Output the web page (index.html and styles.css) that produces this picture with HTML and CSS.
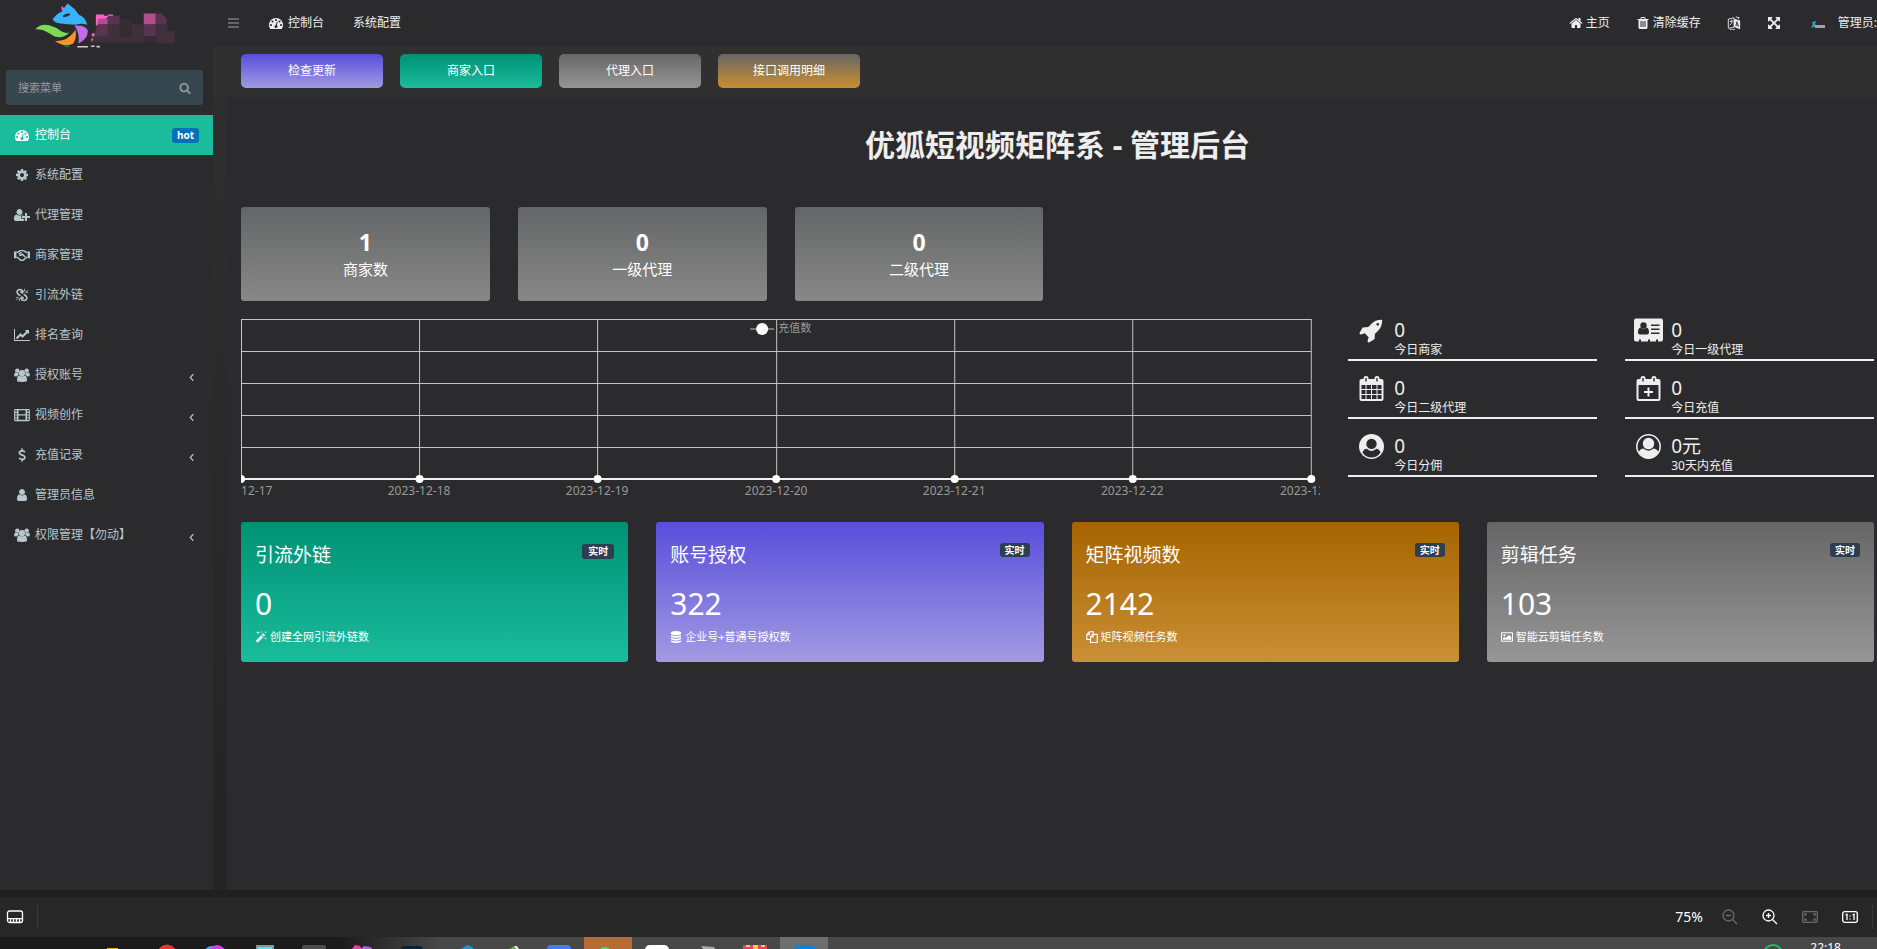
FILE: index.html
```html
<!DOCTYPE html>
<html lang="zh-CN">
<head>
<meta charset="utf-8">
<title>管理后台</title>
<link rel="stylesheet" href="styles.css">
</head>
<body>
<svg class="sprite" aria-hidden="true">
  <symbol id="i-dash" viewBox="0 0 1792 1792"><path d="M384 1152q0-53-37.500-90.500t-90.500-37.500-90.500 37.500-37.500 90.500 37.500 90.500 90.500 37.500 90.500-37.500 37.500-90.500zm192-448q0-53-37.500-90.500t-90.500-37.500-90.500 37.500-37.500 90.500 37.500 90.500 90.500 37.500 90.500-37.500 37.500-90.500zm428 481l101-382q6-26-7.500-48.500t-38.500-29.500-48 6.500-30 39.500l-101 382q-60 5-107 43.500t-63 98.500q-20 77 20 146t117 89 146-20 89-117q16-60-6-117t-72-91zm660-33q0-53-37.500-90.500t-90.500-37.500-90.500 37.500-37.500 90.500 37.500 90.500 90.500 37.500 90.500-37.500 37.500-90.500zm-640-640q0-53-37.500-90.500t-90.500-37.500-90.500 37.500-37.500 90.500 37.500 90.500 90.500 37.500 90.500-37.500 37.500-90.500zm448 192q0-53-37.500-90.500t-90.500-37.500-90.500 37.500-37.500 90.500 37.500 90.500 90.500 37.500 90.500-37.500 37.500-90.500zm320 448q0 261-141 483-19 29-54 29h-1402q-35 0-54-29-141-221-141-483 0-182 71-348t191-286 286-191 348-71 348 71 286 191 191 286 71 348z"/></symbol>
  <symbol id="i-cog" viewBox="0 0 1792 1792"><path d="M1152 896q0-106-75-181t-181-75-181 75-75 181 75 181 181 75 181-75 75-181zm512-109v222q0 12-8 23t-20 13l-185 28q-19 54-39 91 35 50 107 138 10 12 10 25t-9 23q-27 37-99 108t-94 71q-12 0-26-9l-138-108q-44 23-91 38-16 136-29 186-7 28-36 28h-222q-14 0-24.500-8.500t-11.500-21.500l-28-184q-49-16-90-37l-141 107q-10 9-25 9-14 0-25-11-126-114-165-168-7-10-7-23 0-12 8-23 15-21 51-66.500t54-70.500q-27-50-41-99l-183-27q-13-2-21-12.500t-8-23.500v-222q0-12 8-23t19-13l186-28q14-46 39-92-40-57-107-138-10-12-10-24 0-10 9-23 26-36 98.500-107.500t94.500-71.500q13 0 26 10l138 107q44-23 91-38 16-136 29-186 7-28 36-28h222q14 0 24.500 8.500t11.500 21.500l28 184q49 16 90 37l142-107q9-9 24-9 13 0 25 10 129 119 165 170 7 8 7 22 0 12-8 23-15 21-51 66.500t-54 70.500q26 50 41 98l183 28q13 2 21 12.500t8 23.500z"/></symbol>
  <symbol id="i-home" viewBox="0 0 1792 1792"><path d="M1472 992v480q0 26-19 45t-45 19h-384v-384h-256v384h-384q-26 0-45-19t-19-45v-480q0-1 .5-3t.5-3l575-474 575 474q1 2 1 6zm223-69l-62 74q-8 9-21 11h-3q-13 0-21-7l-692-577-692 577q-12 8-24 7-13-2-21-11l-62-74q-8-10-7-23.500t11-21.500l719-599q32-26 76-26t76 26l244 204v-195q0-14 9-23t23-9h192q14 0 23 9t9 23v408l219 182q10 8 11 21.500t-7 23.500z"/></symbol>
  <symbol id="i-search" viewBox="0 0 1792 1792"><path d="M1216 832q0-185-131.500-316.500t-316.500-131.500-316.500 131.500-131.500 316.500 131.500 316.500 316.500 131.500 316.500-131.500 131.500-316.500zm512 832q0 52-38 90t-90 38q-54 0-90-38l-343-342q-179 124-399 124-143 0-273.500-55.500t-225-150-150-225-55.500-273.500 55.500-273.500 150-225 225-150 273.500-55.500 273.500 55.500 225 150 150 225 55.500 273.500q0 220-124 399l343 343q37 37 37 90z"/></symbol>
  <symbol id="i-user" viewBox="0 0 1792 1792"><path d="M1536 1399q0 109-62.500 187t-150.500 78h-854q-88 0-150.500-78t-62.500-187q0-85 8.500-160.500t31.500-152 58.500-131 94-89 134.500-34.500q131 128 313 128t313-128q76 0 134.500 34.500t94 89 58.500 131 31.500 152 8.500 160.500zm-256-887q0 159-112.500 271.500t-271.500 112.500-271.500-112.500-112.500-271.500 112.500-271.500 271.500-112.500 271.500 112.500 112.500 271.500z"/></symbol>
  <symbol id="i-useradd" viewBox="0 0 2048 1792"><path d="M704 896q-159 0-271.500-112.500t-112.500-271.500 112.500-271.500 271.500-112.500 271.500 112.500 112.500 271.500-112.500 271.500-271.500 112.500zm960 128h352q13 0 22.500 9.500t9.500 22.500v192q0 13-9.500 22.500t-22.500 9.500h-352v352q0 13-9.500 22.500t-22.500 9.500h-192q-13 0-22.500-9.500t-9.500-22.500v-352h-352q-13 0-22.500-9.500t-9.500-22.500v-192q0-13 9.500-22.500t22.500-9.500h352v-352q0-13 9.500-22.500t22.500-9.500h192q13 0 22.500 9.500t9.500 22.500v352zm-736 224q0 52 38 90t90 38h256v238q-68 50-171 50h-874q-121 0-194-69t-73-190q0-53 3.500-103.500t14-109 26.500-108.500 43-97.500 62-81 85.500-53.500 111.500-20q19 0 39 17 79 61 154.500 91.500t164.500 30.500 164.500-30.500 154.500-91.500q20-17 39-17 132 0 217 96h-223q-52 0-90 38t-38 90v192z"/></symbol>
  <symbol id="i-trash" viewBox="0 0 1792 1792"><path d="M704 1376v-704q0-14-9-23t-23-9h-64q-14 0-23 9t-9 23v704q0 14 9 23t23 9h64q14 0 23-9t9-23zm256 0v-704q0-14-9-23t-23-9h-64q-14 0-23 9t-9 23v704q0 14 9 23t23 9h64q14 0 23-9t9-23zm256 0v-704q0-14-9-23t-23-9h-64q-14 0-23 9t-9 23v704q0 14 9 23t23 9h64q14 0 23-9t9-23zm-544-992h448l-48-117q-7-9-17-11h-317q-10 2-17 11zm928 32v64q0 14-9 23t-23 9h-96v948q0 83-47 143.500t-113 60.500h-832q-66 0-113-58.500t-47-141.500v-952h-96q-14 0-23-9t-9-23v-64q0-14 9-23t23-9h309l70-167q15-37 54-63t79-26h320q40 0 79 26t54 63l70 167h309q14 0 23 9t9 23z"/></symbol>
  <symbol id="i-expand" viewBox="0 0 1792 1792"><path d="M1411 541l-355 355 355 355 144-144q29-31 70-14 39 17 39 59v448q0 26-19 45t-45 19h-448q-42 0-59-40-17-39 14-69l144-144-355-355-355 355 144 144q31 30 14 69-17 40-59 40h-448q-26 0-45-19t-19-45v-448q0-42 40-59 39-17 69 14l144 144 355-355-355-355-144 144q-19 19-45 19-12 0-24-5-40-17-40-59v-448q0-26 19-45t45-19h448q42 0 59 40 17 39-14 69l-144 144 355 355 355-355-144-144q-31-30-14-69 17-40 59-40h448q26 0 45 19t19 45v448q0 42-39 59-13 5-25 5-26 0-45-19z"/></symbol>
  <symbol id="i-line" viewBox="0 0 2048 1792"><path d="M2048 1536v128h-2048v-1536h128v1408h1920zm-128-1248v435q0 21-19.500 29.500t-35.500-7.500l-121-121-633 633q-10 10-23 10t-23-10l-233-233-416 416-192-192 585-585q10-10 23-10t23 10l233 233 464-464-121-121q-16-16-7.500-35.500t29.500-19.500h435q14 0 23 9t9 23z"/></symbol>
  <symbol id="i-rocket" viewBox="0 0 1792 1792"><path d="M1440 448q0-40-28-68t-68-28-68 28-28 68 28 68 68 28 68-28 28-68zm224-288q0 249-75.500 430.500t-253.500 360.500q-81 80-195 176l-20 379q-2 16-16 26l-384 224q-7 4-16 4-12 0-23-9l-64-64q-13-14-8-32l85-276-281-281-276 85q-3 1-9 1-14 0-23-9l-64-64q-17-19-5-39l224-384q10-14 26-16l379-20q96-114 176-195 188-187 358-258t431-71q14 0 24 9.500t10 22.500z"/></symbol>
  <symbol id="i-db" viewBox="0 0 1792 1792"><path d="M896 768q237 0 443-43t325-127v170q0 69-103 128t-280 93.500-385 34.500-385-34.500-280-93.500-103-128v-170q119 84 325 127t443 43zm0 768q237 0 443-43t325-127v170q0 69-103 128t-280 93.500-385 34.500-385-34.500-280-93.500-103-128v-170q119 84 325 127t443 43zm0-384q237 0 443-43t325-127v170q0 69-103 128t-280 93.500-385 34.500-385-34.500-280-93.500-103-128v-170q119 84 325 127t443 43zm0-1152q208 0 385 34.500t280 93.500 103 128v128q0 69-103 128t-280 93.500-385 34.500-385-34.500-280-93.500-103-128v-128q0-69 103-128t280-93.500 385-34.500z"/></symbol>
  <symbol id="i-shake" viewBox="0 0 20 16"><path d="M0 3.500h3v8.500H0zM17 3.500h3v8.500h-3z"/><path d="M3 4.500h2l2.500-2h5l2.500 2h2M3 11h1.500l4 3.500h3l4-3.500H17M14 10.500L10.500 7 8.500 8.500Q6.500 8.500 7 6.500L9.500 4.500" fill="none" stroke="currentColor" stroke-width="1.800"/></symbol>
  <symbol id="i-unlink" viewBox="0 0 16 16"><path d="M6 9L3 6.500Q1.500 4 3.500 2.500t4.500 0L10 5M10 7l3 2.500q1.500 2.500-.5 4t-4.500 0L6 11M9 6L6 4M7 10l3 2" fill="none" stroke="currentColor" stroke-width="1.800"/><path d="M11 1v3M12 5h3M12.500 4.500l2-2M5 12v3M1 11h3M1.500 14l2-2" stroke="currentColor"/></symbol>
  <symbol id="i-group" viewBox="0 0 18 16"><circle cx="9" cy="5.800" r="3.600"/><circle cx="3.600" cy="3" r="2.500"/><circle cx="14.400" cy="3" r="2.500"/><path d="M3.500 15.500q-.8-6.500 2.300-7 3.200 2 6.400 0 3.100.5 2.300 7-5.500 1-11 0zM0 9.500Q0 5 1.500 5q1.800 1.200 3.300.6Q4.800 7 5.600 8 4 8 3 9.800zM18 9.500Q18 5 16.500 5q-1.800 1.200-3.300.6Q13.200 7 12.400 8 14 8 15 9.800z"/></symbol>
  <symbol id="i-film" viewBox="0 0 18 16"><path fill-rule="evenodd" d="M1.500 1h15q1.500 0 1.500 1.500v11q0 1.500-1.500 1.500h-15Q0 15 0 13.500v-11Q0 1 1.500 1zM5 2.500v4.700h8V2.500zM5 8.700v4.800h8V8.700zM1.200 2.500v1.800h2V2.500zM1.200 5.600v1.800h2V5.600zM1.200 8.700v1.800h2V8.700zM1.200 11.700v1.800h2v-1.800zM14.800 2.500v1.800h2V2.500zM14.800 5.600v1.800h2V5.600zM14.800 8.700v1.800h2V8.700zM14.800 11.700v1.800h2v-1.800z"/></symbol>
  <symbol id="i-dollar" viewBox="0 0 16 16"><path d="M11.500 4.500Q8 2.500 5.800 4T6.500 7.300l3 1.200q2.800 1.500 1.300 3.500T4.500 11.800M8 .5V3M8 13v2.500" fill="none" stroke="currentColor" stroke-width="2"/></symbol>
  <symbol id="i-left" viewBox="0 0 16 16"><path d="M10 3L5.500 8l4.500 5" fill="none" stroke="currentColor" stroke-width="1.800"/></symbol>
  <symbol id="i-lang" viewBox="0 0 16 16"><path d="M8 3l7 2v10l-7-2.500z"/><path d="M10 11.500l1.500-5 1.700 6M10.500 10l2 .6" fill="none" stroke="#2b2b2d"/><path d="M1.500 3.500L8 2v11l-6.500 1zM3 6.500L6.500 5.500M5 4.500v1.500M3 10.500Q5.500 9 6 6M10 1l4 1-1.500 1.500M3 15q3 1.500 6 .3" fill="none" stroke="currentColor"/></symbol>
  <symbol id="i-card" viewBox="0 0 29 24"><path d="M2 0h25q2 0 2 2v19q0 2-2 2h-3v-2h-2v2h-6v-2h-2v2H7v-2H5v2H2q-2 0-2-2V2q0-2 2-2z"/><g fill="#2b2b2d"><circle cx="9.500" cy="7" r="3.200"/><path d="M6.500 9q3 2.500 6 0 2.500.5 2.500 5 0 2-2 2H6q-2 0-2-2 0-4.500 2.500-5zM17 6h8.500v1.500H17zM17 10h8.500v1.500H17zM17 14h8.500v1.500H17z"/></g></symbol>
  <symbol id="i-cal" viewBox="0 0 24 25"><path fill-rule="evenodd" d="M2 3h2V2q0-2 2.500-2T9 2v1h6V2q0-2 2.500-2T20 2v1h2q2 0 2 2v18q0 2-2 2H2q-2 0-2-2V5q0-2 2-2zM5.800 2v3.500h1.400V2zM16.800 2v3.500h1.400V2zM2 9v4h4V9zM7 9v4h4.500V9zM12.500 9v4H17V9zM18 9v4h4V9zM2 14v4h4v-4zM7 14v4h4.500v-4zM12.500 14v4H17v-4zM18 14v4h4v-4zM2 19v4h4v-4zM7 19v4h4.500v-4zM12.500 19v4H17v-4zM18 19v4h4v-4z"/></symbol>
  <symbol id="i-calplus" viewBox="0 0 24 25"><path fill-rule="evenodd" d="M2 3h2V2q0-2 2.500-2T9 2v1h6V2q0-2 2.500-2T20 2v1h2q2 0 2 2v18q0 2-2 2H2q-2 0-2-2V5q0-2 2-2zM5.800 2v3.500h1.400V2zM16.800 2v3.500h1.400V2zM2 9v14h20V9zM11 11.500h2V15h3.500v2H13v3.500h-2V17H7.500v-2H11z"/></symbol>
  <symbol id="i-usero" viewBox="0 0 24 24"><circle cx="12" cy="12" r="12"/><g fill="#2b2b2d"><circle cx="12" cy="9.500" r="5"/><path d="M7.500 14.200Q4.500 14.500 3.300 17.800a10.400 10.400 0 0 0 17.400 0q-1.200-3.300-4.200-3.600-4.500 4.300-9 0z"/></g></symbol>
  <symbol id="i-userf" viewBox="0 0 24 24"><circle cx="12" cy="12" r="11.200" fill="none" stroke="currentColor" stroke-width="1.500"/><circle cx="12" cy="9.200" r="5.500"/><path d="M7 14q5 4 10 0 3.500.5 4.500 4-4 5.500-9.500 5.500T2.500 18q1-3.500 4.500-4z"/></symbol>
  <symbol id="i-magic" viewBox="0 0 16 16"><path d="M1 13L11 3l2.500 2.500L3.500 15.500zM9 6.500L10.500 8l1.300-1.300-1.500-1.500z" fill-rule="evenodd"/><path d="M4 0l.6 1.700L6.500 2.300l-1.900.6L4 4.500l-.6-1.600-1.900-.6 1.900-.6zM14 0l.4 1 1.200.5-1.200.5L14 3l-.4-1-1.200-.5 1.200-.5zM14 8l.4 1.200 1.300.5-1.300.5-.4 1.300-.4-1.300-1.300-.5 1.300-.5zM8.500 0l.4 1 1 .4-1 .4-.4 1-.4-1-1-.4 1-.4z"/></symbol>
  <symbol id="i-copy" viewBox="0 0 16 16"><path d="M5.500 11.300H1V5l3.500-4h5v3M4.500 1v4H1M9 4.500h6v10.800H6V8l3-3.500zM9.500 4.500V8H6" fill="none" stroke="currentColor" stroke-width="1.500"/></symbol>
  <symbol id="i-image" viewBox="0 0 18 16"><path fill-rule="evenodd" d="M1.500 1h15q1.500 0 1.500 1.500v11q0 1.500-1.500 1.500h-15Q0 15 0 13.500v-11Q0 1 1.500 1zM1.500 2.500v11h15v-11z"/><circle cx="5" cy="5.500" r="1.700"/><path d="M3 12v-2l2.500-2 1.500 1.500L12 5l3.500 3.500V12z"/></symbol>
</svg>

<div class="app">
  <aside class="side">
    <div class="brand">
      <svg class="logo" viewBox="105 5 430 140" role="img" aria-label="logo">
        <path fill="#38b2fb" d="M203 9l20 16 14 18q20 8 25 30-20-6-34 0-28-2-46-4-18-2-24-12 12-18 28-24 6-12 17-24z"/>
        <path fill="#2b2b2d" d="M190 44q12-8 22-4-6 10-22 10z"/>
        <path fill="#ff5fc8" d="M184 20l4-3 6 10-8 4z"/>
        <path fill="#7ed957" d="M106 86q16-18 42-12 22 6 36 18 14 8 24 4-18 20-44 12-20-12-32-18-12-4-26-4z"/>
        <path fill="#f7952c" d="M165 122q28 0 44-14 12-10 18-20 4 26-8 42-22 12-54-8z"/>
        <path fill="#c46be8" d="M224 76q30-4 40 14 0 26-28 39 4-30-12-53z"/>
        <path fill="#ff5fc8" d="M288 42h24v4h12v-4h16v6h-14l-10 8h-12l-10 20h-6zM276 98h8v10h-8zM274 114h10v9h-10z"/>
        <path fill="#b14e8c" d="M296 54h28v18h-32zM432 39h36v33h-36z"/>
        <path fill="#593450" d="M324 46h36v26h-36zM468 39h18l15 15v18h-33zM292 72h32v36h-40zM432 72h36v36h-36z"/>
        <path fill="#40303b" d="M324 72h36v36h-36zM396 72h36v36h-36zM468 72h36v20h22v36h-58zM284 108h148v18H274z"/>
        <path fill="#352d33" d="M360 54h36v54h-36zM432 108h36v18h-36z"/>
        <path fill="#d0d0d0" d="M232 137h32v4h-32zM274 135h10v5h-10zM290 136h10v5h-10z"/>
        <path fill="#0f7f68" d="M194 136h14v4h-14z"/>
      </svg>
    </div>
    <form class="search">
      <input type="text" placeholder="搜索菜单" aria-label="搜索菜单">
      <button type="button" aria-label="搜索"><svg class="ic"><use href="#i-search"/></svg></button>
    </form>
    <nav class="menu">
      <a class="on" href="#"><svg class="ic"><use href="#i-dash"/></svg><span>控制台</span><b class="hot">hot</b></a>
      <a href="#"><svg class="ic"><use href="#i-cog"/></svg><span>系统配置</span></a>
      <a href="#"><svg class="ic"><use href="#i-useradd"/></svg><span>代理管理</span></a>
      <a href="#"><svg class="ic"><use href="#i-shake"/></svg><span>商家管理</span></a>
      <a href="#"><svg class="ic"><use href="#i-unlink"/></svg><span>引流外链</span></a>
      <a href="#"><svg class="ic"><use href="#i-line"/></svg><span>排名查询</span></a>
      <a href="#"><svg class="ic"><use href="#i-group"/></svg><span>授权账号</span><svg class="arrow"><use href="#i-left"/></svg></a>
      <a href="#"><svg class="ic"><use href="#i-film"/></svg><span>视频创作</span><svg class="arrow"><use href="#i-left"/></svg></a>
      <a href="#"><svg class="ic"><use href="#i-dollar"/></svg><span>充值记录</span><svg class="arrow"><use href="#i-left"/></svg></a>
      <a href="#"><svg class="ic"><use href="#i-user"/></svg><span>管理员信息</span></a>
      <a href="#"><svg class="ic"><use href="#i-group"/></svg><span>权限管理【勿动】</span><svg class="arrow"><use href="#i-left"/></svg></a>
    </nav>
  </aside>

  <div class="main">
    <header class="top">
      <button class="burger" type="button" aria-label="菜单"><i></i><i></i><i></i></button>
      <nav class="tabs">
        <a href="#"><svg class="ic"><use href="#i-dash"/></svg>控制台</a>
        <a href="#">系统配置</a>
      </nav>
      <nav class="tools">
        <a href="#"><svg class="ic"><use href="#i-home"/></svg>主页</a>
        <a href="#"><svg class="ic"><use href="#i-trash"/></svg>清除缓存</a>
        <a href="#" aria-label="语言"><svg class="ic"><use href="#i-lang"/></svg></a>
        <a href="#" aria-label="全屏"><svg class="ic"><use href="#i-expand"/></svg></a>
        <a class="me" href="#"><svg class="avatar" viewBox="0 0 15 8"><path d="M0 7l2-4-1-2 4-1-1 3 2 2-3 1z" fill="#22a7c9"/><path d="M4 4h10v3H4z" fill="#9fa4a8"/></svg>管理员:</a>
      </nav>
    </header>

    <div class="actions">
      <button class="violet" type="button">检查更新</button>
      <button class="green" type="button">商家入口</button>
      <button class="gray" type="button">代理入口</button>
      <button class="mix" type="button">接口调用明细</button>
    </div>

    <main class="panel">
      <h1>优狐短视频矩阵系 - 管理后台</h1>
      <section class="grid six">
        <div class="tile"><strong>1</strong><span>商家数</span></div>
        <div class="tile"><strong>0</strong><span>一级代理</span></div>
        <div class="tile"><strong>0</strong><span>二级代理</span></div>
      </section>

      <section class="grid six">
        <svg class="chart" viewBox="0 0 1079 187" role="img" aria-label="充值数">
          <path class="rule" d="M0 1.500H1070M0 33.500H1070M0 65.500H1070M0 97.500H1070M0 129.500H1070M.5 1V161M178.500 1V161M356.500 1V161M535.500 1V161M713.500 1V161M891.500 1V161M1070 1V161"/>
          <path class="series" d="M0 161H1070"/>
          <g class="dots"><circle cx="0" cy="161" r="4"/><circle cx="178.500" cy="161" r="4"/><circle cx="356.500" cy="161" r="4"/><circle cx="535" cy="161" r="4"/><circle cx="713.500" cy="161" r="4"/><circle cx="891.500" cy="161" r="4"/><circle cx="1070" cy="161" r="4"/></g>
          <path class="rule" d="M509 11H533"/>
          <circle class="key" cx="521" cy="11" r="6"/>
          <text x="537" y="14" class="legend">充值数</text>
          <g class="axis"><text x="0" y="177">2023-12-17</text><text x="178" y="177">2023-12-18</text><text x="356" y="177">2023-12-19</text><text x="535" y="177">2023-12-20</text><text x="713" y="177">2023-12-21</text><text x="891" y="177">2023-12-22</text><text x="1070" y="177">2023-12-23</text></g>
        </svg>
        <div class="stats">
          <div class="stat"><svg><use href="#i-rocket"/></svg><b>0</b><span>今日商家</span></div>
          <div class="stat"><svg><use href="#i-card"/></svg><b>0</b><span>今日一级代理</span></div>
          <div class="stat"><svg><use href="#i-cal"/></svg><b>0</b><span>今日二级代理</span></div>
          <div class="stat"><svg><use href="#i-calplus"/></svg><b>0</b><span>今日充值</span></div>
          <div class="stat"><svg><use href="#i-usero"/></svg><b>0</b><span>今日分佣</span></div>
          <div class="stat"><svg><use href="#i-userf"/></svg><b>0元</b><span>30天内充值</span></div>
        </div>
      </section>

      <section class="grid four">
        <article class="card green"><header><h2>引流外链</h2><em class="big">实时</em></header><strong>0</strong><p><svg><use href="#i-magic"/></svg>创建全网引流外链数</p></article>
        <article class="card violet"><header><h2>账号授权</h2><em>实时</em></header><strong>322</strong><p><svg><use href="#i-db"/></svg>企业号+普通号授权数</p></article>
        <article class="card amber"><header><h2>矩阵视频数</h2><em>实时</em></header><strong>2142</strong><p><svg><use href="#i-copy"/></svg>矩阵视频任务数</p></article>
        <article class="card gray"><header><h2>剪辑任务</h2><em>实时</em></header><strong>103</strong><p><svg><use href="#i-image"/></svg>智能云剪辑任务数</p></article>
      </section>
    </main>
  </div>
</div>

<footer class="viewer">
  <button class="strip" type="button" aria-label="胶片栏"><svg class="outline" viewBox="0 0 18 14"><rect x="1.500" y="1" width="15" height="11.500" rx="2"/><path d="M1.500 8.700h15M4.500 9v3.500M7.500 9v3.500M10.500 9v3.500M13.500 9v3.500"/></svg></button>
  <div class="zoom">
    <span>75%</span>
    <button class="off" type="button" aria-label="缩小"><svg class="outline" viewBox="0 0 16 16"><circle cx="6.500" cy="6.500" r="5.500"/><path d="M10.500 10.500L15 15M4 6.500h5"/></svg></button>
    <button type="button" aria-label="放大"><svg class="outline" viewBox="0 0 16 16"><circle cx="6.500" cy="6.500" r="5.500"/><path d="M10.500 10.500L15 15M4 6.500h5M6.500 4v5"/></svg></button>
    <button class="off" type="button" aria-label="适应窗口"><svg class="outline" viewBox="0 0 16 12"><rect x=".7" y=".7" width="14.600" height="10.600" rx="1"/><path d="M3 5V3h2M11 3h2v2M13 7v2h-2M5 9H3V7"/></svg></button>
    <button type="button" aria-label="原始大小"><svg class="outline" viewBox="0 0 16 12"><rect x=".7" y=".7" width="14.600" height="10.600" rx="2"/><path d="M3.500 4l1.500-.7V9M10.500 4l1.500-.7V9M8 4.500v1M8 7.500v1"/></svg></button>
  </div>
</footer>
<div class="taskbar">
  <svg class="apps" viewBox="0 0 860 12" aria-hidden="true">
    <path fill="#b56c35" d="M584 0h48v12h-48z"/><path fill="#6e6e6e" d="M780 0h48v12h-48z"/>
    <path fill="#f2a900" d="M107 11h11v1h-11z"/>
    <circle cx="167" cy="17" r="9.500" fill="#e6392c"/>
    <circle cx="212" cy="17" r="8" fill="#2fb7ee"/><circle cx="217" cy="17" r="9" fill="#d63bf2"/>
    <path fill="#8a9298" d="M256 8h18v4h-18z"/><path fill="#52e3f2" d="M258 10h14v2h-14z"/>
    <path fill="#4c4c4c" d="M302 10q0-2 2-2h20q2 0 2 2v2h-24z"/>
    <path fill="#f23b9c" d="M352 12l3-4 5 1 2 3z"/><path fill="#b65be8" d="M361 12l3-3 7 1 1 2z"/>
    <path fill="#04233d" d="M401 12q1-3 4-3h14q3 0 4 3z"/>
    <path fill="#1995d4" d="M461 12l6-4q5 1 7 4z"/>
    <path fill="#5cb338" d="M509 12l6-3 4 3z"/><path fill="#e0e0e0" d="M514 9l3 0 2 3h-3z"/>
    <path fill="#3d7ff5" d="M547 12q0-4 4-4h16q4 0 4 4z"/>
    <circle cx="605" cy="17" r="7" fill="#45e06a"/>
    <path fill="#fff" d="M645 12q1-4 5-4h14q4 0 5 4z"/>
    <path fill="#a5aaa5" d="M701 9l13 1 1 2h-12z"/>
    <path fill="#ed3a72" d="M743 8h24v4h-24z"/><path fill="#ffcf2e" d="M746 8h4v2h-4zM753 8h5v4h-5zM761 8h4v2h-4z"/>
    <path fill="#1181d8" d="M793 12q1-4 5-4h13q4 0 5 4z"/>
  </svg>
  <svg class="ring" viewBox="0 0 20 6" aria-hidden="true"><circle cx="10" cy="11" r="9" fill="none" stroke="#13c66b" stroke-width="2"/></svg>
  <time>22:18</time>
</div>
</body>
</html>
```

FILE: styles.css
```css
* { box-sizing: border-box; }
body {
  margin: 0;
  height: 100vh;
  display: flex;
  flex-direction: column;
  overflow: hidden;
  background: #1f1f1f;
  color: #eee;
  font: 12px/20px "Noto Sans", "Noto Sans CJK SC", sans-serif;
}
a { color: inherit; text-decoration: none; }
button { border: 0; padding: 0; background: none; color: inherit; font: inherit; }
svg { fill: currentColor; flex: none; }
.sprite { position: absolute; width: 0; height: 0; }
.ic { width: 14px; height: 14px; }

.app { flex: 1; display: flex; min-height: 0; background: #2b2b2d; }

/* sidebar */
.side { width: 213px; flex: none; background: #2b2b2d; color: #b8c7ce; }
.brand { height: 70px; padding: 2px 0 0 35px; }
.logo { display: block; width: 143px; height: 47px; }
.search {
  display: flex;
  align-items: center;
  height: 35px;
  margin: 0 10px 10px 6px;
  padding: 0 12px;
  border-radius: 3px;
  background: #37474f;
}
.search input {
  flex: 1;
  min-width: 0;
  padding: 0;
  border: 0;
  outline: 0;
  background: none;
  color: #ccc;
  font: inherit;
  font-size: 11px;
}
.search input::placeholder { color: #999; opacity: 1; }
.search button { display: flex; color: #999; }
.search .ic { width: 12px; height: 12px; }
.menu a {
  display: flex;
  align-items: center;
  height: 40px;
  padding: 0 14px;
}
.menu span { flex: 1; margin-left: 5px; }
.menu .ic { width: 16px; height: 14px; }
.menu .on { background: #1abc9c; color: #fff; }
.hot {
  padding: 0 5px;
  border-radius: 3px;
  background: #0073b7;
  font-size: 10px;
  line-height: 15px;
}
.arrow { width: 12px; height: 11px; margin: 4px 1px 0 0; }

/* header */
.main {
  flex: 1;
  min-width: 0;
  display: flex;
  flex-direction: column;
  background: linear-gradient(#2f2f2f, #242424) 0 0 / 14px 100% no-repeat, #2b2b2d;
}
.top {
  display: flex;
  align-items: center;
  height: 46px;
  padding-left: 15px;
  background: #2b2b2d;
}
.burger { width: 11px; display: grid; gap: 2px; }
.burger i { height: 2px; background: #666; }
.tabs { display: flex; gap: 29px; margin-left: 30px; }
.tabs a { display: flex; align-items: center; gap: 5px; }
.tools { display: flex; align-items: center; gap: 26px; margin-left: auto; }
.tools a { display: flex; align-items: center; gap: 3px; }
.tools .me { gap: 12px; margin-left: 4px; }
.avatar { width: 15px; height: 8px; margin-top: 4px; }

/* action buttons */
.actions {
  display: flex;
  gap: 17px;
  padding: 8px 28px 9px;
  background: #303030;
}
.actions button {
  width: 142px;
  height: 34px;
  border-radius: 5px;
  color: #fff;
}
.violet { background: linear-gradient(#584edb, #a29ae2); }
.green { background: linear-gradient(#009174, #1abc9c); }
.gray { background: linear-gradient(#666, #969696); }
.mix { background: linear-gradient(#666, #c98f30); }
.amber { background: linear-gradient(#a56400, #ca9035); }

/* panel */
.panel {
  flex: 1;
  display: flex;
  flex-direction: column;
  gap: 17px;
  padding: 26px 3px 0 28px;
}
h1 {
  margin: 0 0 23px;
  font-size: 30px;
  line-height: 44px;
  text-align: center;
}
.grid { display: grid; column-gap: 28px; }
.six { grid-template-columns: repeat(6, 1fr); }
.four { grid-template-columns: repeat(4, 1fr); }
.tile {
  display: flex;
  flex-direction: column;
  align-items: center;
  height: 94px;
  padding-top: 21px;
  border-radius: 3px;
  background: linear-gradient(#646566, #888);
  color: #fff;
}
.tile strong { font-size: 23px; line-height: 28px; }
.tile span { font-size: 15px; line-height: 26px; }

.chart { grid-column: span 4; width: 100%; display: block; }
.rule { stroke: #c4c4c4; fill: none; }
.series { stroke: #eee; stroke-width: 2; }
.dots, .key { fill: #fff; }
.axis { fill: #999; text-anchor: middle; font-size: 12px; }
.legend { fill: #999; font-size: 11px; }

.stats {
  grid-column: span 2;
  display: grid;
  grid-template-columns: 1fr 1fr;
  align-content: start;
  gap: 15px 28px;
}
.stat {
  display: grid;
  grid-template-columns: 29px 1fr;
  column-gap: 8px;
  padding-left: 9px;
  border-bottom: 2px solid #eee;
}
.stat svg { grid-row: span 2; width: 29px; height: 25px; }
.stat b { font-size: 19px; font-weight: 400; line-height: 24px; }
.stat span { line-height: 16px; padding-bottom: 1px; }

.card { height: 140px; padding: 19px 14px 0; border-radius: 3px; color: #fff; }
.card header { display: flex; justify-content: space-between; align-items: flex-start; }
h2 { margin: 0; font-size: 19px; font-weight: 400; line-height: 28px; }
.card em {
  margin-top: 2px;
  padding: 0 5px;
  border-radius: 3px;
  background: #2c3e50;
  font-size: 10px;
  font-style: normal;
  font-weight: 700;
  line-height: 14px;
}
.card .big { padding: 0 6px; line-height: 15px; margin-top: 3px; }
.card strong { display: block; margin-top: 15px; font-size: 30px; font-weight: 400; line-height: 40px; }
.card p { display: flex; align-items: center; gap: 3px; margin: 3px 0 0; font-size: 11px; }
.card p svg { width: 12px; height: 12px; }

/* viewer bar */
.viewer {
  display: flex;
  align-items: center;
  height: 47px;
  border-top: 7px solid #1f1f1f;
  background: #272727;
  color: #fff;
}
.outline { display: block; width: 16px; height: 16px; fill: none; stroke: currentColor; stroke-width: 1.3; }
.off { color: #6b6b6b; }
.strip {
  display: flex;
  align-items: center;
  height: 24px;
  padding: 0 13px 0 6px;
  border-right: 1px solid #3a3a3a;
}
.strip .outline { width: 18px; height: 14px; }
.zoom {
  display: flex;
  align-items: center;
  gap: 24px;
  height: 24px;
  margin-left: auto;
  margin-right: 4px;
  padding-right: 14px;
  border-right: 1px solid #3a3a3a;
}
.zoom span { margin-right: -5px; font-size: 14px; }

.taskbar {
  display: flex;
  height: 12px;
  overflow: hidden;
  background: linear-gradient(90deg, #1b1b1b 340px, #484848 440px);
}
.apps { width: 860px; height: 12px; margin-right: auto; }
.ring { width: 20px; height: 6px; margin: 6px 27px 0 0; }
.taskbar time { margin: 3px 36px 0 0; font-size: 12px; line-height: 16px; color: #fff; }
```
